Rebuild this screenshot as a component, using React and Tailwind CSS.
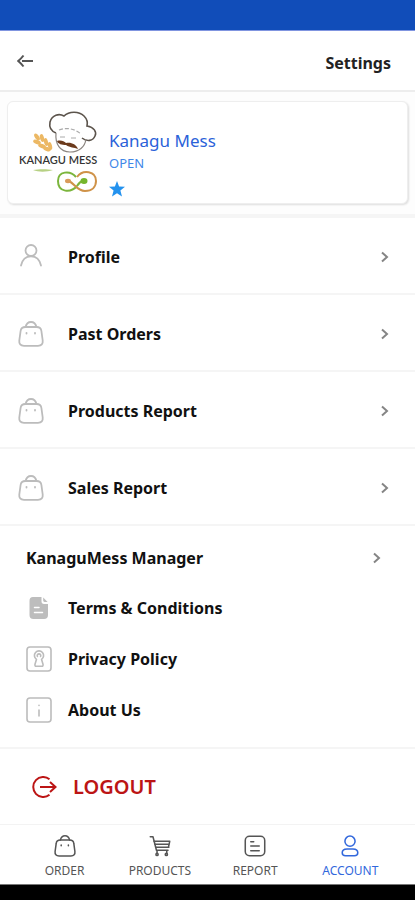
const FONT = "font-['Noto_Sans',sans-serif]";

const rows = [
  { label: 'Profile',         icon: UserIcon },
  { label: 'Past Orders',     icon: BagIcon },
  { label: 'Products Report', icon: BagIcon },
  { label: 'Sales Report',    icon: BagIcon },
];

const links = [
  { label: 'Terms & Conditions', icon: DocIcon },
  { label: 'Privacy Policy',     icon: KeyholeIcon },
  { label: 'About Us',           icon: InfoIcon },
];

const tabs = [
  { label: 'ORDER',    icon: BagIcon },
  { label: 'PRODUCTS', icon: CartIcon },
  { label: 'REPORT',   icon: ReportIcon },
  { label: 'ACCOUNT',  icon: AccountIcon, active: true },
];

function Svg({ size = 26, box = 26, stroke = 1.8, className = '', children }) {
  return (
    <svg width={size} height={size} viewBox={`0 0 ${box} ${box}`} fill="none" stroke="currentColor" strokeWidth={stroke} strokeLinecap="round" strokeLinejoin="round" className={`shrink-0 ${className}`} aria-hidden="true">
      {children}
    </svg>
  );
}

function UserIcon(props) {
  return (
    <Svg {...props}>
      <circle cx="13" cy="6.500" r="5.5"/>
      <path d="M3 21.500C4.300 15.500 8 12.300 13 12.300S21.700 15.500 23 21.500"/>
    </Svg>
  );
}

function BagIcon(props) {
  return (
    <Svg {...props}>
      <path d="M7.500 6h11c3.200 0 4.600 1.300 4.900 4l1.300 9.500c.4 3.400-1.200 5.300-4.700 5.300H6c-3.500 0-5.100-1.900-4.700-5.300L2.600 10c.3-2.700 1.700-4 4.900-4z"/>
      <path d="M7.500 6C8.300 2.800 10.200 1 13 1s4.700 1.800 5.500 5"/>
      <path d="M8.500 11.800v.8M9.500 11.500M17 11.800v.8"/>
    </Svg>
  );
}

function DocIcon() {
  return (
    <svg width="26" height="26" viewBox="0 0 26 26" className="shrink-0" aria-hidden="true">
      <path d="M7 2h8.500v4.500c0 1.600.9 2.500 2.500 2.500h4v11c0 2.700-1.300 4-4 4H7.500c-2.700 0-4-1.300-4-4V6c0-2.700 1-4 3.500-4z" fill="#bdbdbd"/>
      <path d="M17.200 2.400 21.600 7h-3c-.9 0-1.400-.5-1.400-1.400z" fill="#bdbdbd"/>
      <path d="M8.500 12.500h4.500M8.500 17.500h8" stroke="#fff" strokeWidth="1.500" strokeLinecap="round"/>
    </svg>
  );
}

function KeyholeIcon(props) {
  return (
    <Svg {...props} stroke={1.600}>
      <rect x="1" y="1" width="24" height="24" rx="3"/>
      <path d="M10.500 13.300A4.600 4.600 0 1 1 15.500 13.300L17 18.300c.3 1.200-.2 2-1.200 2h-5.600c-1 0-1.500-.8-1.200-2z"/>
      <path d="M11.400 10.500a1.800 1.800 0 1 1 3.200 0"/>
    </Svg>
  );
}

function InfoIcon(props) {
  return (
    <Svg {...props} stroke={1.600}>
      <rect x="1" y="1" width="24" height="24" rx="3"/>
      <path d="M13 8.300v.2M13 13v6"/>
    </Svg>
  );
}

function CartIcon(props) {
  return (
    <Svg {...props}>
      <path d="M1.500 2h3.200l4.100 16h13.700"/>
      <path d="M6 7.500h18.500M7 11h17M8 14.500h15.500M24.500 7.500l-1.500 7"/>
      <path d="M9.500 18.500V22M21 18.500V22"/>
      <circle cx="9.500" cy="23" r="1.300"/>
      <circle cx="20.500" cy="23" r="1.300"/>
    </Svg>
  );
}

function ReportIcon(props) {
  return (
    <Svg {...props}>
      <rect x="1.500" y="1.500" width="23" height="23" rx="5"/>
      <path d="M8 8h3.500M8 13h10M8 18.500h10"/>
    </Svg>
  );
}

function AccountIcon(props) {
  return (
    <Svg {...props}>
      <circle cx="13" cy="7.300" r="6"/>
      <path d="M9.500 16.500h7c3.500 0 5.700 2 5.700 4.500 0 2-1.500 3.500-4 3.500H7.800c-2.500 0-4-1.500-4-3.500 0-2.500 2.200-4.500 5.700-4.500z"/>
    </Svg>
  );
}

function Chevron() {
  return (
    <svg width="8" height="12" viewBox="0 0 8 12" fill="none" stroke="#858585" strokeWidth="2" className="shrink-0" aria-hidden="true">
      <path d="m1 1.500 5 4.500-5 4.500"/>
    </svg>
  );
}

function Logo() {
  return (
    <svg width="80" height="84" viewBox="0 0 80 84" fill="none" role="img" aria-label="Kanagu Mess logo">
      {/* chef hat and face */}
      <path d="M37 22c-5-2-7-6-6-11 2-7 9-9 14-6 5-5 15-5 20 0 3 3 4 6 3 10 7 1 10 6 8 10-2 5-8 6-13 2" stroke="#5c544c" strokeWidth="1.600"/>
      <path d="M37 22c-1 11 4 19 14 19 9 0 15-5 16-13" stroke="#8b8580" strokeWidth="1.200"/>
      <path d="M40 19c8-3 16-1 22 4" stroke="#aaa" strokeWidth="1.200" strokeDasharray="4 2"/>
      <path d="M41 26h5M52 27h5" stroke="#aaa" strokeWidth="1"/>
      <path d="M38 30c4-1 7 0 9 2 5-1 10 1 12 6-4-2-8-1-12-4-4 0-8-1-9-4z" fill="#6b3a1c"/>
      <g fill="#ecb864">
        <ellipse cx="18" cy="26" rx="4" ry="2" transform="rotate(55 18 26)"/>
        <ellipse cx="23" cy="27" rx="4" ry="2" transform="rotate(75 23 27)"/>
        <ellipse cx="18" cy="31" rx="4" ry="2" transform="rotate(20 18 31)"/>
        <ellipse cx="27" cy="31" rx="4" ry="2" transform="rotate(75 27 31)"/>
        <ellipse cx="23" cy="35" rx="4" ry="2" transform="rotate(20 23 35)"/>
        <ellipse cx="31" cy="35" rx="4" ry="2" transform="rotate(75 31 35)"/>
        <ellipse cx="28" cy="38" rx="4" ry="2" transform="rotate(20 28 38)"/>
      </g>
      <text x="0" y="53" fontSize="11" fontWeight="600" fill="#333" fontFamily="Lato, sans-serif">KANAGU MESS</text>
      <path d="M14 59c6-1 14-1 20 0-6 2-14 2.500-20 0z" fill="#b7d184"/>
      {/* spoon and fork loop */}
      <path d="M57 66c-6-7-18-6-18 4 0 12 13 12 19 5" stroke="#7bb53c" strokeWidth="2"/>
      <path d="M50 70c6 3 8 10 16 10 7 0 11-4 11-10" stroke="#cf9248" strokeWidth="2"/>
      <path d="M77 70c0-10-13-12-19-4" stroke="#cf9248" strokeWidth="2"/>
      <path d="M58 75c2-3 4-5 7-6" stroke="#7bb53c" strokeWidth="2"/>
      <ellipse cx="49" cy="70" rx="3" ry="2.200" fill="#d99b5b"/>
      <ellipse cx="65" cy="70" rx="3.500" ry="3" fill="#75b52b"/>
    </svg>
  );
}

export default function App() {
  return (
    <div className={`flex flex-col bg-white text-[#111] ${FONT}`}>
      <div className="h-[31px] bg-[#114db9] border-b border-[#8095e0]"/>

      <header className="flex h-[61px] items-center justify-between border-b-2 border-[#ededed] pl-[17px] pr-6">
        <button aria-label="Back">
          <svg width="16" height="14" viewBox="0 0 16 14" fill="none" stroke="#555" strokeWidth="2" aria-hidden="true">
            <path d="M6.500 1.500C5 3.500 3 5.500 1.200 7 3 8.500 5 10.500 6.500 12.500M5 7h11"/>
          </svg>
        </button>
        <h1 className="pt-1 text-base font-bold text-[#222]">Settings</h1>
      </header>

      <section className="border-b-4 border-[#f5f5f5] bg-[#fdfdfd] px-[7px] pt-[9px] pb-[10px]">
        <div className="flex h-[103px] items-center gap-[10px] rounded-md border border-[#eee] bg-white pl-[11px] shadow-[1px_1px_2px_#ddd]">
          <Logo/>
          <div className="flex flex-col pt-5">
            <h2 className="text-[17px] leading-6 text-[#2b62d9]">Kanagu Mess</h2>
            <span className="text-[13px] leading-5 text-[#3f87e8]">OPEN</span>
            <svg width="16" height="16" viewBox="0 0 16 16" fill="#2492ee" className="mt-2" role="img" aria-label="Rating">
              <path d="m8 0 2.100 5.400 5.900.3-4.600 3.700L13 15.500l-5-3.300-5 3.300 1.600-6.100L0 5.700l5.900-.3z"/>
            </svg>
          </div>
        </div>
      </section>

      <nav>
        {rows.map(r => (
          <a key={r.label} href="#" className="flex h-[77px] items-center border-b-2 border-[#f5f5f5] pt-[2px] pl-[18px] pr-[26px]">
            <r.icon className="text-[#bcbcbc]"/>
            <span className="ml-6 flex-1 text-base font-bold">{r.label}</span>
            <Chevron/>
          </a>
        ))}
      </nav>

      <section className="border-b-2 border-[#f5f5f5] pb-3">
        <a href="#" className="flex h-14 items-center justify-between pt-2 pl-[26px] pr-[34px]">
          <span className="text-base font-bold">KanaguMess Manager</span>
          <Chevron/>
        </a>
        {links.map(l => (
          <a key={l.label} href="#" className="flex h-[51px] items-center pl-[26px]">
            <l.icon className="text-[#bcbcbc]"/>
            <span className="ml-4 text-base font-bold">{l.label}</span>
          </a>
        ))}
      </section>

      <button className="flex h-[75px] items-center gap-4 pl-8 text-[#bc1515]">
        <svg width="25" height="22" viewBox="0 0 25 22" fill="none" stroke="currentColor" strokeWidth="2" aria-hidden="true">
          <path d="M17.500 3.200a10 10 0 1 0 0 15.600M8 11h15M18 6l5.500 5-5.500 5"/>
        </svg>
        <span className="text-xl leading-6 font-semibold">LOGOUT</span>
      </button>

      <nav className="grid grid-cols-4 border-t border-[#f3f3f3] px-[17px]">
        {tabs.map(t => (
          <a key={t.label} href="#" className={`flex h-[59px] flex-col items-center pt-[10px] ${t.active ? 'text-[#3268dc]' : 'text-[#555]'}`}>
            <t.icon size={22}/>
            <span className="mt-1 text-xs leading-5">{t.label}</span>
          </a>
        ))}
      </nav>
      <div className="h-[17px] border-t border-[#777] bg-black"/>
    </div>
  );
}
